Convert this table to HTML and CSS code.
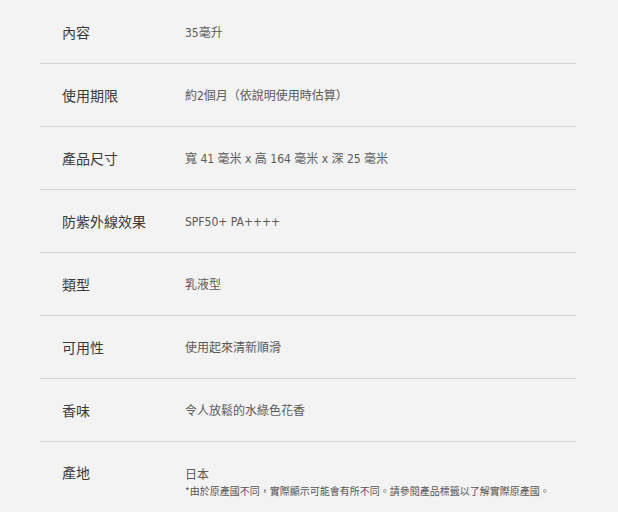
FILE: index.html
```html
<!DOCTYPE html>
<html lang="zh-Hant">
<head>
<meta charset="utf-8">
<link rel="stylesheet" href="styles.css">
</head>
<body>
<div class="specs">
  <div class="row"><div class="label">內容</div><div class="value">35毫升</div></div>
  <div class="row"><div class="label">使用期限</div><div class="value">約2個月（依說明使用時估算）</div></div>
  <div class="row"><div class="label">產品尺寸</div><div class="value">寬 41 毫米 x 高 164 毫米 x 深 25 毫米</div></div>
  <div class="row"><div class="label">防紫外線效果</div><div class="value">SPF50+ PA++++</div></div>
  <div class="row"><div class="label">類型</div><div class="value">乳液型</div></div>
  <div class="row"><div class="label">可用性</div><div class="value">使用起來清新順滑</div></div>
  <div class="row"><div class="label">香味</div><div class="value">令人放鬆的水綠色花香</div></div>
  <div class="row last"><div class="label">產地</div><div class="value">日本<div class="note">*由於原產國不同，實際顯示可能會有所不同。請參閱產品標籤以了解實際原產國。</div></div></div>
</div>
</body>
</html>
```
FILE: styles.css
```css
html, body {
  margin: 0;
  padding: 0;
  background: #f3f3f3;
}
body {
  font-family: "Noto Sans CJK TC", "Noto Sans", sans-serif;
  padding: 1px 42px 0 40px;
}
.specs {
  width: 536px;
}
.row {
  display: flex;
  align-items: center;
  height: 63px;
  box-sizing: border-box;
  border-bottom: 1px solid #d3d3d3;
  padding-left: 22px;
}
.label {
  width: 123px;
  flex: none;
  font-size: 14px;
  line-height: 20px;
  color: #3a3a3a;
}
.value {
  font-family: "DejaVu Sans Condensed", "Noto Sans CJK TC", sans-serif;
  font-stretch: condensed;
  font-size: 12px;
  line-height: 18px;
  color: #5a5a5a;
  padding-top: 2px;
}
.row.last {
  align-items: flex-start;
  border-bottom: none;
  height: auto;
  padding-top: 20px;
}
.row.last .value {
  padding-top: 4px;
}
.note {
  font-family: "Noto Sans CJK TC", sans-serif;
  font-stretch: normal;
  font-size: 10px;
  line-height: 13px;
  color: #555;
}
```
